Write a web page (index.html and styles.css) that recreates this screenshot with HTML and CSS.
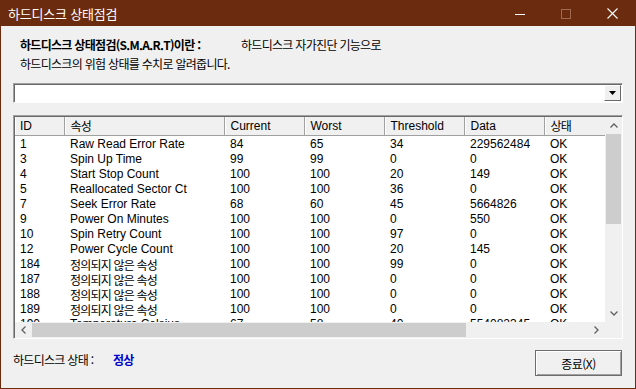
FILE: index.html
```html
<!DOCTYPE html>
<html lang="ko">
<head>
    <meta charset="UTF-8">
    <title>하드디스크 상태점검</title>
    <link rel="stylesheet" href="styles.css">
</head>
<body>
    <div class="window">
        <!-- 타이틀 바 -->
        <div class="titlebar">
            <span class="title">하드디스크 상태점검</span>
            <div class="caption-buttons">
                <div class="cap-btn">
                    <svg width="10" height="10" viewBox="0 0 10 10"><line x1="0" y1="5.5" x2="10" y2="5.5" stroke="#fff" stroke-width="1"/></svg>
                </div>
                <div class="cap-btn">
                    <svg width="10" height="10" viewBox="0 0 10 10"><rect x="0.5" y="0.5" width="9" height="9" fill="none" stroke="#a06a52" stroke-width="1"/></svg>
                </div>
                <div class="cap-btn">
                    <svg width="11" height="11" viewBox="0 0 11 11"><path d="M0.5 0.5 L10.5 10.5 M10.5 0.5 L0.5 10.5" stroke="#fff" stroke-width="1.1"/></svg>
                </div>
            </div>
        </div>

        <div class="content">
            <div class="intro">
                <div class="intro-line"><span class="intro-title">하드디스크 상태점검(S.M.A.R.T)이란 :</span><span class="intro-desc">하드디스크 자가진단 기능으로</span></div>
                <div class="intro-line">하드디스크의 위험 상태를 수치로 알려줍니다.</div>
            </div>

            <!-- 디스크 선택 콤보박스 -->
            <div class="combo">
                <div class="combo-text"></div>
                <div class="combo-btn">
                    <svg width="7" height="4" viewBox="0 0 7 4"><path d="M0 0 H7 L3.5 4 Z" fill="#000"/></svg>
                </div>
            </div>

            <!-- S.M.A.R.T 목록 -->
            <div class="list">
                <div class="viewport">
                    <table class="smart">
                        <colgroup>
                            <col style="width:49px">
                            <col style="width:160px">
                            <col style="width:80px">
                            <col style="width:80px">
                            <col style="width:80px">
                            <col style="width:80px">
                            <col style="width:80px">
                        </colgroup>
                        <thead>
                            <tr>
                                <th class="col-id">ID</th>
                                <th><span class="ko">속성</span></th>
                                <th>Current</th>
                                <th>Worst</th>
                                <th>Threshold</th>
                                <th>Data</th>
                                <th><span class="ko">상태</span></th>
                            </tr>
                        </thead>
                        <tbody>
                            <tr><td class="col-id">1</td><td>Raw Read Error Rate</td><td>84</td><td>65</td><td>34</td><td>229562484</td><td>OK</td></tr>
                            <tr><td class="col-id">3</td><td>Spin Up Time</td><td>99</td><td>99</td><td>0</td><td>0</td><td>OK</td></tr>
                            <tr><td class="col-id">4</td><td>Start Stop Count</td><td>100</td><td>100</td><td>20</td><td>149</td><td>OK</td></tr>
                            <tr><td class="col-id">5</td><td>Reallocated Sector Ct</td><td>100</td><td>100</td><td>36</td><td>0</td><td>OK</td></tr>
                            <tr><td class="col-id">7</td><td>Seek Error Rate</td><td>68</td><td>60</td><td>45</td><td>5664826</td><td>OK</td></tr>
                            <tr><td class="col-id">9</td><td>Power On Minutes</td><td>100</td><td>100</td><td>0</td><td>550</td><td>OK</td></tr>
                            <tr><td class="col-id">10</td><td>Spin Retry Count</td><td>100</td><td>100</td><td>97</td><td>0</td><td>OK</td></tr>
                            <tr><td class="col-id">12</td><td>Power Cycle Count</td><td>100</td><td>100</td><td>20</td><td>145</td><td>OK</td></tr>
                            <tr><td class="col-id">184</td><td><span class="ko">정의되지 않은 속성</span></td><td>100</td><td>100</td><td>99</td><td>0</td><td>OK</td></tr>
                            <tr><td class="col-id">187</td><td><span class="ko">정의되지 않은 속성</span></td><td>100</td><td>100</td><td>0</td><td>0</td><td>OK</td></tr>
                            <tr><td class="col-id">188</td><td><span class="ko">정의되지 않은 속성</span></td><td>100</td><td>100</td><td>0</td><td>0</td><td>OK</td></tr>
                            <tr><td class="col-id">189</td><td><span class="ko">정의되지 않은 속성</span></td><td>100</td><td>100</td><td>0</td><td>0</td><td>OK</td></tr>
                            <tr><td class="col-id">190</td><td>Temperature Celsius</td><td>67</td><td>58</td><td>40</td><td>554082345</td><td>OK</td></tr>
                        </tbody>
                    </table>
                </div>
                <div class="vscroll">
                    <div class="arrow">
                        <svg width="8" height="5" viewBox="0 0 8 5"><path d="M0.5 4.5 L4 1 L7.5 4.5" fill="none" stroke="#606060" stroke-width="1.3"/></svg>
                    </div>
                    <div class="vtrack"><div class="vthumb"></div></div>
                    <div class="arrow">
                        <svg width="8" height="5" viewBox="0 0 8 5"><path d="M0.5 0.5 L4 4 L7.5 0.5" fill="none" stroke="#606060" stroke-width="1.3"/></svg>
                    </div>
                </div>
                <div class="hscroll">
                    <div class="arrow">
                        <svg width="5" height="8" viewBox="0 0 5 8"><path d="M4.5 0.5 L1 4 L4.5 7.5" fill="none" stroke="#606060" stroke-width="1.3"/></svg>
                    </div>
                    <div class="htrack"><div class="hthumb"></div></div>
                    <div class="arrow">
                        <svg width="5" height="8" viewBox="0 0 5 8"><path d="M0.5 0.5 L4 4 L0.5 7.5" fill="none" stroke="#606060" stroke-width="1.3"/></svg>
                    </div>
                </div>
                <div class="corner"></div>
            </div>

            <div class="footer">
                <div class="status"><span class="status-label">하드디스크 상태 :</span><span class="status-value">정상</span></div>
                <button class="btn-close">종료(X)</button>
            </div>
        </div>
    </div>
</body>
</html>
```

FILE: styles.css
```css
body {
    margin: 0;
    padding: 0;
    background: #f0f0f0;
    font-family: "Liberation Sans", "Noto Sans CJK KR", sans-serif;
    font-size: 12px;
    color: #000;
}

.window {
    width: 636px;
    height: 389px;
    box-sizing: border-box;
    border: 1px solid #6b2b0e;
    background: #f0f0f0;
    display: flex;
    flex-direction: column;
    overflow: hidden;
}

.titlebar {
    height: 25px;
    flex: none;
    background: #6b2b0e;
    display: flex;
    align-items: center;
    justify-content: space-between;
}

.title {
    color: #fff;
    padding-left: 7px;
    font-family: "Noto Sans CJK KR", sans-serif;
    font-size: 13px;
    letter-spacing: -0.2px;
}

.caption-buttons {
    display: flex;
    height: 100%;
}

.cap-btn {
    width: 46px;
    height: 100%;
    display: flex;
    align-items: center;
    justify-content: center;
}

.content {
    flex: 1;
    display: flex;
    flex-direction: column;
    padding: 0 12px;
}

/* 설명 문구 */
.intro {
    margin-top: 9px;
    padding-left: 7px;
    font-family: "Noto Sans CJK KR", sans-serif;
    font-size: 12px;
    letter-spacing: -0.7px;
}

.intro-line {
    height: 19px;
    line-height: 19px;
    white-space: nowrap;
}

.intro-title {
    font-weight: bold;
    display: inline-block;
    width: 221px;
}

/* 콤보박스 */
.combo {
    margin-top: 10px;
    height: 20px;
    box-sizing: border-box;
    border: 1px solid;
    border-color: #a0a0a0 #fff #fff #a0a0a0;
    box-shadow: inset 1px 1px 0 #696969;
    background: #fff;
    display: flex;
    justify-content: flex-end;
    padding: 1px 1px 1px 2px;
}

.combo-btn {
    width: 17px;
    height: 16px;
    box-sizing: border-box;
    background: #f0f0f0;
    border: 1px solid;
    border-color: #fff #696969 #696969 #fff;
    display: flex;
    align-items: center;
    justify-content: center;
}

/* 리스트뷰 */
.list {
    margin-top: 12px;
    height: 224px;
    box-sizing: border-box;
    border: 1px solid;
    border-color: #a0a0a0 #fff #fff #a0a0a0;
    box-shadow: inset 1px 1px 0 #696969;
    padding: 1px 0 0 1px;
    display: grid;
    grid-template-columns: 1fr 17px;
    grid-template-rows: 1fr 16px;
    background: #fff;
}

.viewport {
    overflow: hidden;
    background: #fff;
}

.smart {
    table-layout: fixed;
    border-collapse: collapse;
    width: 609px;
}

.smart th {
    height: 18px;
    padding: 0 6px;
    font-weight: normal;
    text-align: left;
    background: #f0f0f0;
    border-bottom: 1px solid #a0a0a0;
    border-right: 1px solid #a0a0a0;
    box-shadow: inset 1px 0 0 #fff;
    white-space: nowrap;
    overflow: hidden;
}

.smart td {
    height: 15px;
    line-height: 15px;
    padding: 0 6px;
    white-space: nowrap;
    overflow: hidden;
}

.smart tbody tr:first-child td {
    padding-top: 1px;
}

.smart .col-id {
    padding-left: 5px;
}

.ko {
    display: inline-block;
    height: 15px;
    line-height: 15px;
    vertical-align: top;
    font-family: "Noto Sans CJK KR", sans-serif;
    font-size: 12px;
    letter-spacing: -0.8px;
}

.smart th .ko {
    line-height: 18px;
    height: 18px;
}

.vscroll {
    background: #f0f0f0;
    display: flex;
    flex-direction: column;
}

.vscroll .arrow {
    height: 17px;
    display: flex;
    align-items: center;
    justify-content: center;
}

.vtrack {
    flex: 1;
}

.vthumb {
    margin: 0 1px;
    height: 90px;
    background: #cdcdcd;
}

.hscroll {
    background: #f0f0f0;
    display: flex;
}

.hscroll .arrow {
    width: 17px;
    display: flex;
    align-items: center;
    justify-content: center;
}

.htrack {
    flex: 1;
    padding: 1px 0;
}

.hthumb {
    width: 434px;
    height: 100%;
    background: #cdcdcd;
}

.corner {
    background: #f0f0f0;
}

/* 하단 */
.footer {
    margin-top: 11px;
    display: flex;
    justify-content: space-between;
    align-items: flex-start;
}

.status {
    line-height: 19px;
    font-family: "Noto Sans CJK KR", sans-serif;
    font-size: 12px;
    letter-spacing: -0.7px;
    white-space: nowrap;
}

.status-label {
    display: inline-block;
    width: 100px;
}

.status-value {
    color: #0000cc;
    font-weight: bold;
}

.btn-close {
    width: 87px;
    height: 26px;
    margin-right: 1px;
    background: #f0f0f0;
    border: 1px solid #6d6d6d;
    box-shadow: inset 1px 1px 0 #fff, inset -1px -1px 0 #a0a0a0;
    font-family: "Noto Sans CJK KR", sans-serif;
    font-size: 12px;
    letter-spacing: -0.5px;
    padding: 0;
    color: #000;
}
```
